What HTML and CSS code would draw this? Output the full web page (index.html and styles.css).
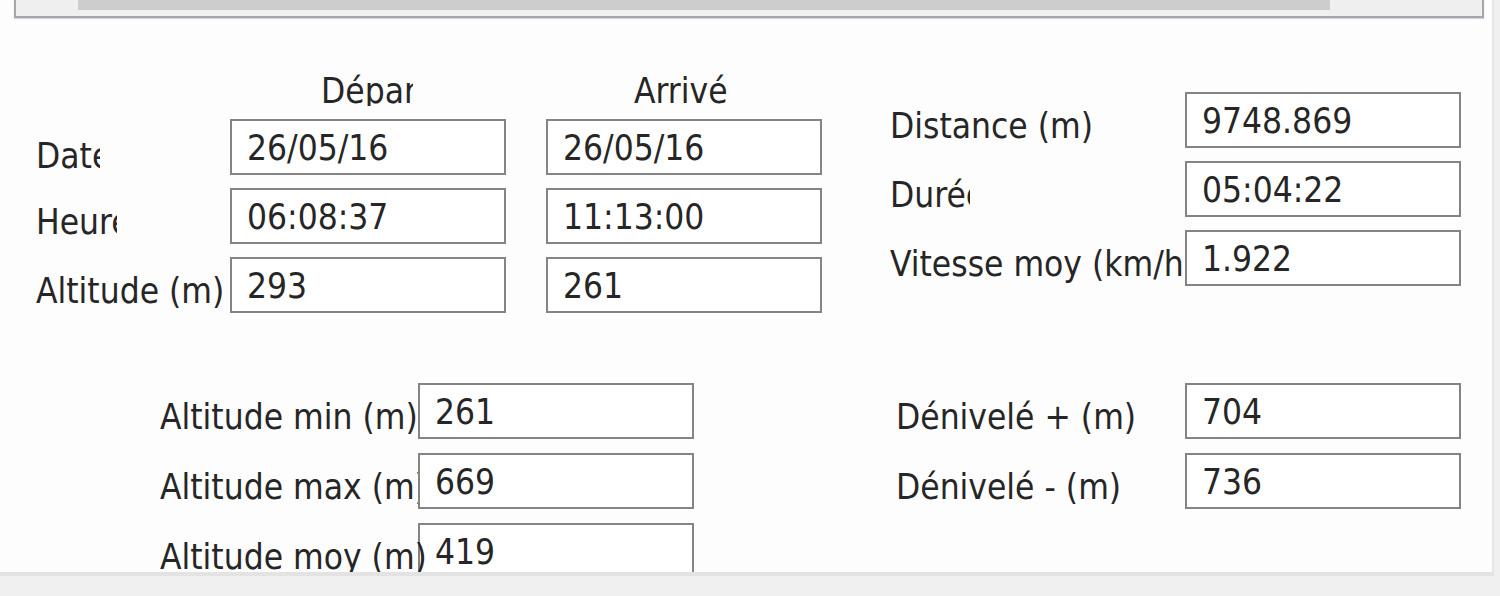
FILE: index.html
```html
<!DOCTYPE html>
<html lang="fr">
<head>
<meta charset="utf-8">
<title>Trace</title>
<link rel="stylesheet" href="styles.css">
</head>
<body>
<div class="window">
  <div class="toppanel"><div class="thumb"></div></div>
  <div class="form">
    <div class="upper">
      <div class="times">
        <div class="corner"></div>
        <div class="head head-dep"><span>Départ</span></div>
        <div class="head head-arr"><span>Arrivée</span></div>

        <div class="label label-date"><span class="w-date">Date</span></div>
        <div class="box">26/05/16</div>
        <div class="box box-arr">26/05/16</div>

        <div class="label"><span class="w-heure">Heure</span></div>
        <div class="box">06:08:37</div>
        <div class="box box-arr">11:13:00</div>

        <div class="label"><span>Altitude (m)</span></div>
        <div class="box">293</div>
        <div class="box box-arr">261</div>
      </div>

      <div class="totals">
        <div class="label"><span>Distance (m)</span></div>
        <div class="box">9748.869</div>
        <div class="label"><span class="w-duree">Durée</span></div>
        <div class="box">05:04:22</div>
        <div class="label"><span>Vitesse moy (km/h)</span></div>
        <div class="box">1.922</div>
      </div>
    </div>

    <div class="lower">
      <div class="alts">
        <div class="label"><span>Altitude min (m)</span></div>
        <div class="box">261</div>
        <div class="label"><span>Altitude max (m)</span></div>
        <div class="box">669</div>
        <div class="label label-over"><span>Altitude moy (m)</span></div>
        <div class="box">419</div>
      </div>
      <div class="denivs">
        <div class="label"><span>Dénivelé + (m)</span></div>
        <div class="box">704</div>
        <div class="label"><span>Dénivelé - (m)</span></div>
        <div class="box">736</div>
      </div>
    </div>
  </div>
</div>
</body>
</html>
```

FILE: styles.css
```css
html, body {
  margin: 0;
  padding: 0;
}
body {
  background: #f0f0f0;
  width: 1500px;
  height: 596px;
  overflow: hidden;
  font-family: "DejaVu Sans Condensed", "Liberation Sans", sans-serif;
  font-stretch: condensed;
  font-size: 35px;
  color: #262626;
}
.window {
  width: 1494px;
  height: 576px;
  box-sizing: border-box;
  background: #fdfdfd;
  border-right: 2px solid #e6e6e6;
  border-bottom: 4px solid #e3e3e3;
  overflow: hidden;
}
.toppanel {
  margin-left: 14px;
  width: 1470px;
  height: 18px;
  box-sizing: border-box;
  background: #efefef;
  border: 2px solid #a3a6ac;
  border-top: none;
  box-shadow: 0 1px 1px #d6d6d6;
}
.thumb {
  margin-left: 62px;
  width: 1252px;
  height: 10px;
  background: #cdcdcd;
}
.upper {
  display: flex;
  align-items: flex-start;
  height: 296px;
}
.times {
  margin-left: 36px;
  margin-top: 53px;
  display: grid;
  grid-template-columns: 194px 276px 316px;
  grid-template-rows: 35px 56px 56px 56px;
  row-gap: 13px;
}
.box-arr {
  margin-left: 40px;
}
.head {
  height: 35px;
  line-height: 40px;
  overflow: hidden;
}
.head span {
  display: block;
  overflow: hidden;
  white-space: nowrap;
}
.head-dep span {
  margin-left: 91px;
  width: 92px;
}
.head-arr span {
  margin-left: 128px;
  width: 95px;
}
.box {
  height: 56px;
  box-sizing: border-box;
  border: 2px solid #848484;
  background: #ffffff;
  padding-left: 15px;
  padding-top: 1px;
  line-height: 52px;
  white-space: nowrap;
  overflow: hidden;
}
.times .box {
  width: 276px;
}
.label {
  height: 56px;
  line-height: 56px;
  padding-top: 6px;
  box-sizing: border-box;
  overflow: hidden;
  white-space: nowrap;
}
.label span {
  display: block;
  overflow: hidden;
}
.label-date {
  padding-top: 9px;
}
.label-over {
  overflow: visible;
  position: relative;
  z-index: 1;
}
.label-over span {
  overflow: visible;
}
.w-date { width: 64px; }
.w-heure { width: 81px; }
.w-duree { width: 80px; }

.totals {
  margin-left: 68px;
  margin-top: 74px;
  display: grid;
  grid-template-columns: 295px 276px;
  grid-auto-rows: 56px;
  row-gap: 13px;
}
.lower {
  display: flex;
  align-items: flex-start;
  margin-top: 69px;
}
.alts {
  margin-left: 160px;
  display: grid;
  grid-template-columns: 258px 276px;
  grid-auto-rows: 56px;
  row-gap: 14px;
}
.denivs {
  margin-left: 202px;
  display: grid;
  grid-template-columns: 289px 276px;
  grid-auto-rows: 56px;
  row-gap: 14px;
}
```
